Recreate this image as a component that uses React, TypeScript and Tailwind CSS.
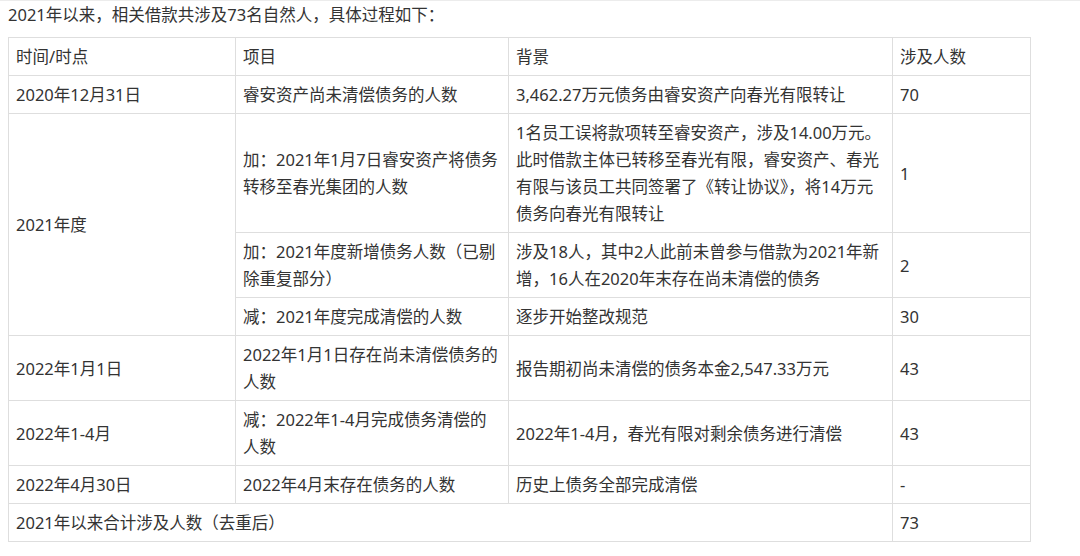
const font = { fontFamily: '"Noto Sans", "Noto Sans CJK SC", sans-serif' };

type Row = {
  time?: { text: string; span?: number };
  item: string[];
  background: string[];
  count: string;
};

const rows: Row[] = [
  {
    time: { text: "2020年12月31日" },
    item: ["睿安资产尚未清偿债务的人数"],
    background: ["3,462.27万元债务由睿安资产向春光有限转让"],
    count: "70",
  },
  {
    time: { text: "2021年度", span: 3 },
    item: ["加：2021年1月7日睿安资产将债务", "转移至春光集团的人数"],
    background: [
      "1名员工误将款项转至睿安资产，涉及14.00万元。",
      "此时借款主体已转移至春光有限，睿安资产、春光",
      "有限与该员工共同签署了《转让协议》，将14万元",
      "债务向春光有限转让",
    ],
    count: "1",
  },
  {
    item: ["加：2021年度新增债务人数（已剔", "除重复部分）"],
    background: ["涉及18人，其中2人此前未曾参与借款为2021年新", "增，16人在2020年末存在尚未清偿的债务"],
    count: "2",
  },
  {
    item: ["减：2021年度完成清偿的人数"],
    background: ["逐步开始整改规范"],
    count: "30",
  },
  {
    time: { text: "2022年1月1日" },
    item: ["2022年1月1日存在尚未清偿债务的", "人数"],
    background: ["报告期初尚未清偿的债务本金2,547.33万元"],
    count: "43",
  },
  {
    time: { text: "2022年1-4月" },
    item: ["减：2022年1-4月完成债务清偿的", "人数"],
    background: ["2022年1-4月，春光有限对剩余债务进行清偿"],
    count: "43",
  },
  {
    time: { text: "2022年4月30日" },
    item: ["2022年4月末存在债务的人数"],
    background: ["历史上债务全部完成清偿"],
    count: "-",
  },
];

const cell = "border border-[#dedede] px-[7px] py-[5px] align-middle whitespace-nowrap";

function Lines({ lines }: { lines: string[] }) {
  return (
    <>
      {lines.map((line, i) => (
        <span key={i} className="block">
          {line}
        </span>
      ))}
    </>
  );
}

export default function App() {
  return (
    <div className="min-h-[556px] w-[1080px] border-t border-[#ececec] bg-white text-[16.5px] leading-[27px] text-[#333]" style={font}>
      <p className="pl-2">2021年以来，相关借款共涉及73名自然人，具体过程如下：</p>
      <table className="mt-[9px] ml-2 w-[1022px] table-fixed border-collapse text-left">
        <colgroup>
          <col className="w-[227px]" />
          <col className="w-[273px]" />
          <col className="w-[384px]" />
          <col className="w-[138px]" />
        </colgroup>
        <thead>
          <tr>
            <th className={`${cell} font-normal`}>时间/时点</th>
            <th className={`${cell} font-normal`}>项目</th>
            <th className={`${cell} font-normal`}>背景</th>
            <th className={`${cell} font-normal`}>涉及人数</th>
          </tr>
        </thead>
        <tbody>
          {rows.map((row, i) => (
            <tr key={i}>
              {row.time && (
                <td className={cell} rowSpan={row.time.span ?? 1}>
                  {row.time.text}
                </td>
              )}
              <td className={cell}>
                <Lines lines={row.item} />
              </td>
              <td className={cell}>
                <Lines lines={row.background} />
              </td>
              <td className={cell}>{row.count}</td>
            </tr>
          ))}
          <tr>
            <td className={cell} colSpan={3}>
              2021年以来合计涉及人数（去重后）
            </td>
            <td className={cell}>73</td>
          </tr>
        </tbody>
      </table>
    </div>
  );
}
